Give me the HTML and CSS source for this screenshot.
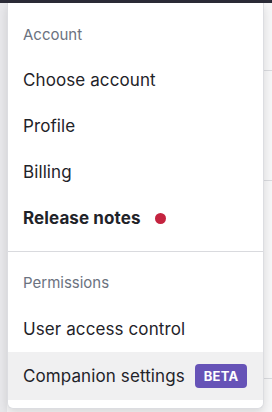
FILE: index.html
```html
<!DOCTYPE html>
<html>
<head>
<meta charset="utf-8">
<link rel="stylesheet" href="styles.css">
</head>
<body>
<div class="topbar"></div>
<div class="page">
  <div class="sidebar"></div>
  <div class="main">
    <div class="row r1"></div>
    <div class="row r2"></div>
    <div class="row r3"></div>
  </div>
  <div class="menu">
    <div class="section">
      <div class="header">Account</div>
      <div class="item">Choose account</div>
      <div class="item">Profile</div>
      <div class="item">Billing</div>
      <div class="item bold">Release notes <span class="dot"></span></div>
    </div>
    <div class="divider"></div>
    <div class="section">
      <div class="header second">Permissions</div>
      <div class="item">User access control</div>
      <div class="item hover">Companion settings <span class="badge">BETA</span></div>
    </div>
  </div>
</div>
</body>
</html>
```

FILE: styles.css
```css
html, body {
  margin: 0;
  padding: 0;
}
body {
  width: 272px;
  height: 412px;
  overflow: hidden;
  background: #f6f6f7;
  font-family: Inter, "Noto Sans", sans-serif;
}
.topbar {
  height: 3px;
  background: #2b2b37;
}
.page {
  position: relative;
  display: flex;
  height: 409px;
}
.sidebar {
  width: 7px;
  background: #e8e8eb;
}
.main {
  flex: 1;
  display: flex;
  flex-direction: column;
}
.row {
  border-bottom: 1px solid #d9dade;
}
.r1 { height: 67px; }
.r2 { height: 109px; }
.r3 { height: 197px; }
.menu {
  position: absolute;
  left: 7px;
  top: 0;
  width: 255px;
  background: #fff;
  border: 1px solid #dcdde1;
  border-top: none;
  border-radius: 0 0 6px 6px;
  box-shadow: 0 4px 10px rgba(0,0,0,0.12);
  padding: 8px 0;
}
.header {
  padding: 14px 15px 12px;
  font-size: 15px;
  line-height: 20px;
  color: #6b7280;
}
.header.second {
  padding: 21px 15px 13px;
}
.item {
  padding: 12px 15px;
  font-size: 17px;
  line-height: 22px;
  letter-spacing: 0.1px;
  color: #1f2329;
  display: flex;
  align-items: center;
}
.bold {
  font-weight: 700;
}
.dot {
  width: 11px;
  height: 11px;
  border-radius: 50%;
  background: #c4233f;
  margin-left: 14px;
}
.hover {
  background: #f0f0f1;
}
.badge {
  margin-left: 10px;
  background: #6653b7;
  color: #fff;
  font-size: 13px;
  font-weight: 700;
  line-height: 24px;
  padding: 0 9px;
  border-radius: 4px;
  letter-spacing: 0.2px;
}
.divider {
  height: 1px;
  background: #d9dade;
  margin: 10px 0 0;
}
```
